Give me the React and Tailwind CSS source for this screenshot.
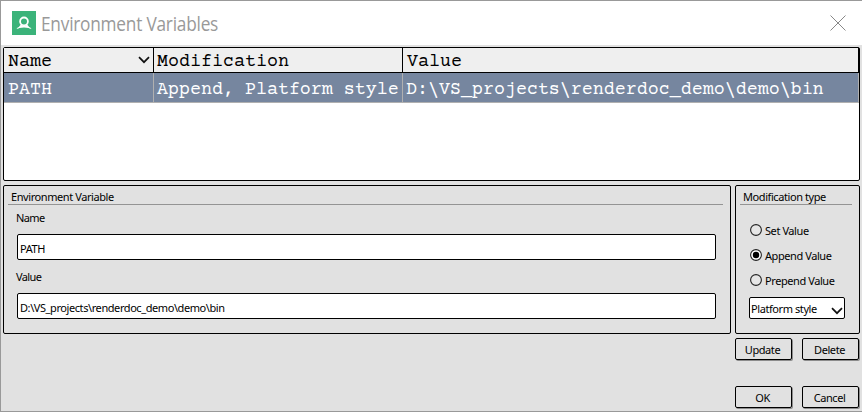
import React from "react";

const ui = "font-['Noto_Sans',sans-serif] text-[11px] leading-[14px] tracking-[-0.42px] whitespace-pre";

function Chevron({ className = "" }) {
  return (
    <svg className={className} width="12" height="8" viewBox="0 0 12 8" fill="none" stroke="#111" strokeWidth="1.7">
      <path d="M1 1.2 L6 6.2 L11 1.2" />
    </svg>
  );
}

function Panel({ title, className, children }) {
  return (
    <section className={`flex h-[149px] flex-col rounded-[2px] border border-black ${className}`}>
      <h2 className="ml-1 mr-[7px] flex h-[19px] shrink-0 items-center border-b border-[#949494] pl-[3px] pt-[4px]">{title}</h2>
      {children}
    </section>
  );
}

function Field({ label, value }) {
  return (
    <div className="flex h-[59px] flex-col">
      <span className="-ml-px h-[23px] tracking-[-0.6px]">{label}</span>
      <div className="flex h-[26px] items-center rounded-[2px] border border-black bg-white pl-[2px] pt-[3px]">{value}</div>
    </div>
  );
}

function Radio({ label, checked }) {
  return (
    <div className="flex h-[25px] items-center">
      <svg width="12" height="12" viewBox="0 0 12 12">
        <circle cx="6" cy="6" r="5.4" fill={checked ? "#fff" : "#e6e6e6"} stroke="#222" strokeWidth="1.1" />
        {checked && <circle cx="6" cy="6" r="3.2" fill="#000" />}
      </svg>
      <span className="ml-[3px] pt-[2px]">{label}</span>
    </div>
  );
}

function Button({ children }) {
  return (
    <button className="flex h-[22px] w-[57px] items-center justify-center rounded-[2px] border border-black pr-[2px] pt-[1px] shadow-[1px_1px_0_#8c8c8c]">
      {children}
    </button>
  );
}

const leftSpecks = [353, 357, 363, 390, 408];
const bottomSpecks = [57, 61, 67];
const topSpecks = [57, 61, 67, 71];

export default function App() {
  return (
    <div className={`relative flex h-[412px] w-[862px] flex-col overflow-hidden border-y border-l border-[#999] bg-[#e1e1e1] text-black ${ui}`}>
      <header className="flex h-[44px] shrink-0 items-center bg-white pl-[11px] pr-4">
        <svg width="24" height="24" viewBox="0 0 24 24">
          <rect width="24" height="24" fill="#3bb37a" />
          <circle cx="12" cy="10.4" r="3.9" fill="none" stroke="#fff" strokeWidth="1.8" />
          <path d="M3.2 18 Q7.2 16.8 8.8 13.4 L10.2 14.3 Q12 15.2 13.8 14.3 L15.2 13.4 Q16.8 16.8 20.8 18 Q12 15 3.2 18Z" fill="#fff" />
        </svg>
        <h1 className="ml-[5px] origin-left scale-x-[0.885] pt-[2px] font-['Open_Sans',sans-serif] text-[19.5px] font-normal leading-[24px] tracking-[-0.25px] text-[#999]">Environment Variables</h1>
        <svg className="ml-auto" width="16" height="16" viewBox="0 0 16 16" fill="none" stroke="#888" strokeWidth="1">
          <path d="M0.5 0.5 L15.5 15.5 M15.5 0.5 L0.5 15.5" />
        </svg>
      </header>
      <main className="flex flex-col pl-[2px] pt-[2px]">
        <div className="h-[134px] w-[857px] rounded-[2px] border border-black bg-white font-['Courier_Prime','FreeMono','Liberation_Mono',monospace] text-[18.33px] leading-[24px] tracking-normal">
          <div className="flex h-[25px] w-[855px] border-b border-r border-black bg-[#efefef]">
            <div className="flex w-[150px] items-center justify-between border-r border-black pl-1 pr-[3px]">
              <span className="pt-[3px]">Name</span>
              <Chevron />
            </div>
            <div className="flex w-[249px] items-center border-r border-black pl-[3px] pt-[3px]">Modification</div>
            <div className="flex items-center pl-1 pt-[3px]">Value</div>
          </div>
          <div className="flex h-[30px] w-[855px] border-b border-r border-[#b0b0b0] bg-[#76869f] text-white">
            <div className="flex w-[150px] items-center border-r border-[#b0b0b0] pl-1 pt-[4px]">PATH</div>
            <div className="flex w-[249px] items-center border-r border-[#b0b0b0] pl-[3px] pt-[4px]">Append, Platform style</div>
            <div className="flex items-center pl-[3px] pt-[4px]">D:\VS_projects\renderdoc_demo\demo\bin</div>
          </div>
        </div>
        <div className="mt-1 flex gap-1">
          <Panel title="Environment Variable" className="w-[728px]">
            <div className="ml-[13px] mt-[6px] w-[699px]">
              <Field label="Name" value="PATH" />
              <Field label="Value" value="D:\VS_projects\renderdoc_demo\demo\bin" />
            </div>
          </Panel>
          <Panel title="Modification type" className="w-[125px]">
            <div className="ml-[13px] mt-[12px] flex flex-col">
              <div className="ml-px flex flex-col">
                <Radio label="Set Value" />
                <Radio label="Append Value" checked />
                <Radio label="Prepend Value" />
              </div>
              <div className="mt-[5px] flex h-[22px] w-[96px] items-center justify-between rounded-[2px] border border-black bg-white pl-[1px] pr-[1px] pt-[2px]">
                Platform style
                <Chevron className="mt-[3px]" />
              </div>
            </div>
          </Panel>
        </div>
        <div className="ml-[732px] mt-1 grid w-[124px] grid-cols-2 gap-x-[10px] gap-y-[26px]">
          <Button>Update</Button>
          <Button>Delete</Button>
          <Button>OK</Button>
          <Button>Cancel</Button>
        </div>
      </main>
      <svg className="pointer-events-none absolute -left-px -top-px" width="862" height="412" fill="#2b2b2b">
        {leftSpecks.map((y) => <rect key={y} x="0" y={y} width="1" height="1" />)}
        {bottomSpecks.map((x) => <rect key={x} x={x} y="411" width="1" height="1" />)}
        {topSpecks.map((x) => <rect key={x} x={x} y="0" width="1" height="1" />)}
      </svg>
    </div>
  );
}
